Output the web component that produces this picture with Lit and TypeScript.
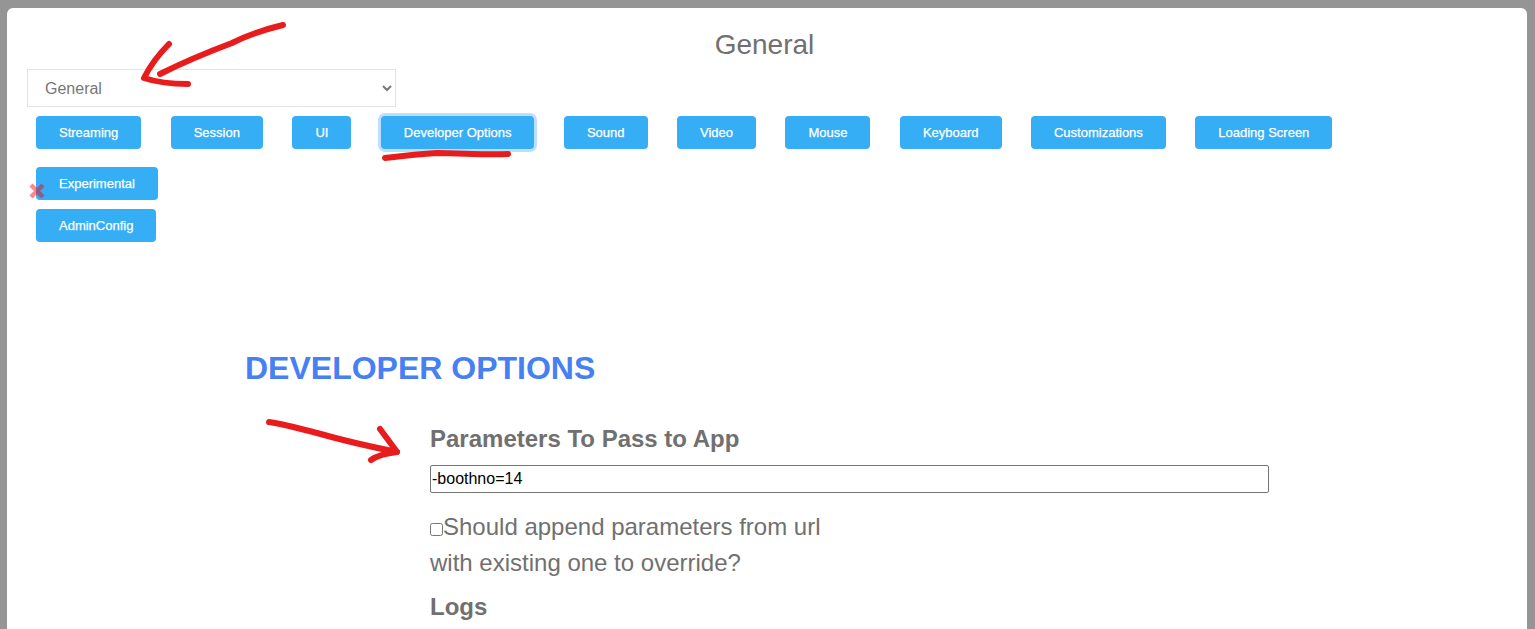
import {css, html, LitElement, svg} from 'lit';
import {customElement} from 'lit/decorators.js';

const TABS = ['Streaming', 'Session', 'UI', 'Developer Options', 'Sound', 'Video', 'Mouse', 'Keyboard', 'Customizations', 'Loading Screen'];

const SCRIBBLES = [
    'M283 25 C262 30 246 36 232 43 C208 52 184 62 160 74',
    'M169 44 C158 55 150 66 144 78 C156 82 172 84 188 84',
    'M385 158 C402 156 420 154 437 153 C460 153 485 155 508 154',
    'M269 422 C285 424 300 429 317 433 C345 441 372 447 397 452',
    'M380 429 C386 437 392 445 397 452 C388 453 378 455 371 460',
];

@customElement("app-root")
export default class AppRoot extends LitElement {
    static styles = css`
        :host {
            display: block;
            position: relative;
            height: 629px;
            overflow: hidden;
            background: #959595;
            font-family: "Liberation Sans", Arial, sans-serif;
            color: #707070;
        }

        .modal {
            box-sizing: border-box;
            height: 640px;
            margin: 8px 8px 0 7px;
            padding: 20px 20px 0;
            background: #fff;
            border-radius: 6px 6px 0 0;
        }

        .title {
            margin: 0 5px 8px 0;
            font-size: 28px;
            font-weight: 400;
            line-height: 33px;
            text-align: center;
        }

        .picker {
            display: block;
            box-sizing: border-box;
            width: 369px;
            height: 38px;
            padding: 0 13px;
            background: #fff;
            border: 1px solid #e3e3e3;
            color: #777;
            font: 16px "Liberation Sans", Arial, sans-serif;
        }

        .tabs {
            display: flex;
            flex-wrap: wrap;
            gap: 0 29.45px;
            margin: 9px 0 18px 9px;
        }

        .tab, .stacked {
            box-sizing: border-box;
            height: 33px;
            padding: 0 23px;
            background: #35aef5;
            border: 0;
            border-radius: 4px;
            color: #fff;
            font: 13px "Liberation Sans", Arial, sans-serif;
            -webkit-text-stroke: 0.25px #fff;
        }

        .tab.active { box-shadow: 0 0 0 3px #bcdfff; }

        .stack {
            position: relative;
            display: flex;
            flex-direction: column;
            align-items: flex-start;
            gap: 9px;
            margin-left: 9px;
        }

        .close {
            position: absolute;
            left: -8px;
            top: 15px;
            width: 18px;
            height: 18px;
        }

        .section { margin: 108px 0 0 218px; }

        .section h2 {
            margin: 0;
            color: #4680f2;
            font-size: 32px;
            font-weight: 700;
            line-height: 37px;
        }

        .fields {
            display: flex;
            flex-direction: column;
            align-items: flex-start;
            margin: 38px 0 0 185px;
        }

        .label {
            font-size: 24px;
            font-weight: 700;
            line-height: 28px;
        }

        .params {
            box-sizing: border-box;
            width: 839px;
            height: 28px;
            margin: 12px 0 16px;
            padding: 0 1px;
            background: #fff;
            border: 1px solid #767676;
            border-radius: 2px;
            color: #000;
            font: 16px "Liberation Sans", Arial, sans-serif;
        }

        .append {
            display: block;
            width: 420px;
            font-size: 24px;
            line-height: 36px;
        }

        .append input {
            width: 13px;
            height: 13px;
            margin: 0;
            vertical-align: -1px;
        }

        .logs { margin-top: 12px; }

        .scribbles {
            position: absolute;
            inset: 0;
            pointer-events: none;
        }

        .scribbles path {
            fill: none;
            stroke: #e81c1c;
            stroke-width: 6;
            stroke-linecap: round;
            stroke-linejoin: round;
        }
    `;

    render() {
        return html`
            <div class="modal">
                <h1 class="title">General</h1>
                <select class="picker"><option>General</option></select>
                <div class="tabs">
                    ${TABS.map((t) => html`<button class="tab ${t === 'Developer Options' ? 'active' : ''}">${t}</button>`)}
                </div>
                <div class="stack">
                    <button class="stacked">Experimental</button>
                    <button class="stacked">AdminConfig</button>
                    <svg class="close" viewBox="0 0 18 18">
                        <path d="M3 3 15 15M15 3 3 15" stroke="#f00" stroke-opacity="0.47" stroke-width="4.5" fill="none"></path>
                    </svg>
                </div>
                <div class="section">
                    <h2>DEVELOPER OPTIONS</h2>
                    <div class="fields">
                        <div class="label">Parameters To Pass to App</div>
                        <input class="params" type="text" .value=${'-boothno=14'} />
                        <label class="append"><input type="checkbox" />Should append parameters from url with existing one to override?</label>
                        <div class="label logs">Logs</div>
                    </div>
                </div>
            </div>
            <svg class="scribbles" width="1535" height="629">
                ${SCRIBBLES.map((d) => svg`<path d=${d}></path>`)}
            </svg>
        `;
    }
}
